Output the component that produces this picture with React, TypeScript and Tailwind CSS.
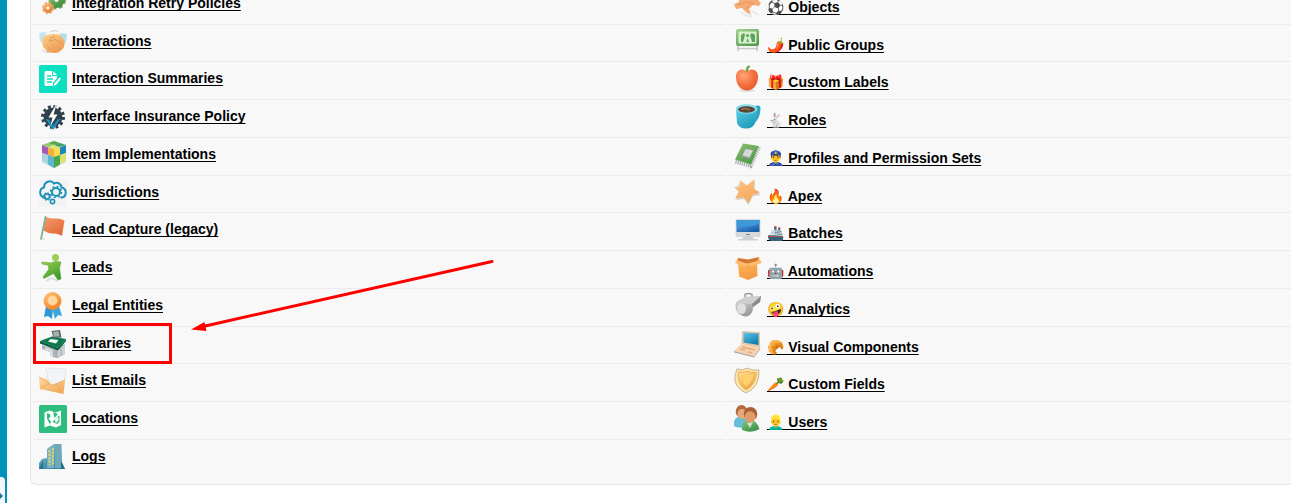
import type { ReactNode } from "react";

type GradProps = { id: string; from: string; to: string };

function Grad({ id, from, to }: GradProps) {
  return (
    <defs>
      <linearGradient id={id} x1="0" y1="0" x2="0.6" y2="1">
        <stop offset="0" stopColor={from} />
        <stop offset="1" stopColor={to} />
      </linearGradient>
    </defs>
  );
}

function Icon({ children }: { children: ReactNode }) {
  return (
    <svg viewBox="0 0 28 28" className="size-7 shrink-0" aria-hidden="true">
      {children}
    </svg>
  );
}

const gearsIcon = (
  <Icon>
    <Grad id="gearGreen" from="#8fc97a" to="#4c9444" />
    <Grad id="gearOrange" from="#f7b873" to="#e8863f" />
    <circle cx="17.500" cy="10" r="8" fill="none" stroke="#68a75d" strokeWidth="3" strokeDasharray="3.600 2.700" />
    <circle cx="17.500" cy="10" r="5" fill="none" stroke="url(#gearGreen)" strokeWidth="6" />
    <circle cx="9" cy="18" r="4.800" fill="none" stroke="#eba266" strokeWidth="2.500" strokeDasharray="2.200 1.570" />
    <circle cx="9" cy="18" r="3.300" fill="none" stroke="url(#gearOrange)" strokeWidth="3.600" />
  </Icon>
);

const handshakeIcon = (
  <Icon>
    <Grad id="hands" from="#ffd393" to="#ec9a4f" />
    <path d="M11 4q4-3 8-.5M3 22q4 4 8 2" fill="none" stroke="#cfcfcf" />
    <path d="M0 5l7-1-1 8-5 2z" fill="#c6e5f3" />
    <path d="M28 6l-7-1 1 8 5 1z" fill="#b4dcee" />
    <path d="M4 9q3-3 7-2.500 3-1.500 6 0 4-1 6 2.500l3 5-1.500 6-5 4.500-5 .5-6-1-4.500-5.500-1-5z" fill="url(#hands)" />
    <path d="M16 8q-5 1-6 5 4 0 6-1.500 4 1 8 5.500" fill="none" stroke="#d98d4a" strokeWidth="0.800" />
    <path d="M8 17l4 4.500M12 16l4 4.500M16 15l4 4" fill="none" stroke="#e09a58" strokeWidth="0.700" />
  </Icon>
);

const summaryIcon = (
  <Icon>
    <rect width="28" height="28" rx="1.500" fill="#0be0c0" />
    <path d="M7 6h7l4 4v3l-4 5v3H7q-1.500 0-1.500-1.500v-12Q5.500 6 7 6z" fill="#fff" />
    <path d="M13.500 6v4.500H18" fill="none" stroke="#0be0c0" />
    <path d="M8 11h4M8 14h6M8 17h5" stroke="#0be0c0" strokeWidth="1.300" />
    <path d="M20.500 12.500l1.500 1.300-5 6.200-2.200.8.600-2.200z" fill="#fff" />
  </Icon>
);

const boltIcon = (
  <Icon>
    <circle cx="14" cy="14" r="10.500" fill="none" stroke="#30404b" strokeWidth="3" strokeDasharray="2.900 2.600" />
    <circle cx="14" cy="14" r="9.500" fill="#30404b" />
    <path d="M6.500 16l7.500 11 7.500-11-3 .5L14 22.500l-4-6z" fill="#178fb8" />
    <path d="M18 0L9.500 14.500h4L11.500 23 18.500 11.500h-4z" fill="#fff" />
  </Icon>
);

const cubeIcon = (
  <Icon>
    <path d="M15 0l12 4v17l-12 6-12-6V4z" fill="#bfdce0" />
    <path d="M15 0l6 2-6 2-6-2z" fill="#58a945" />
    <path d="M9 2l6 2-5 2-7-2z" fill="#92cf63" />
    <path d="M21 2l6 2-7 2-5-2z" fill="#47a05d" />
    <path d="M15 4l5 2-5 2-5-2z" fill="#d9e96d" />
    <path d="M3 4l6 2.500V14l-6-2z" fill="#a75ab7" />
    <path d="M9 6.500L15 8v8l-6-2z" fill="#f6ae36" />
    <path d="M15 8l6-1.500V14l-6 2z" fill="#ffd94e" />
    <path d="M21 6.500L27 4v8l-6 2z" fill="#1f86bb" />
    <path d="M3 12l6 2v9l-6-3z" fill="#a9d3df" />
    <path d="M9 14l6 2v11l-6-3.500z" fill="#5db5cf" />
    <path d="M15 16l6-2v9.500L15 27z" fill="#4ba64a" />
    <path d="M21 14l6-2v8l-6 3z" fill="#d9e56b" />
  </Icon>
);

const jurisdictionIcon = (
  <Icon>
    <rect width="28" height="28" fill="#f2f3f4" />
    <path
      d="M6 18.500C-.5 18 0 9.500 5 8.500 5 2.500 12 .5 15 4.500c4-2 7.500 1 7.500 4 6 1 5.500 10-.5 10"
      fill="none"
      stroke="#1b91b8"
      strokeWidth="2"
      strokeLinecap="round"
    />
    <circle cx="17" cy="13" r="4" fill="none" stroke="#1b91b8" strokeWidth="2" />
    <circle cx="17" cy="13" r="5.500" fill="none" stroke="#1b91b8" strokeWidth="1.500" strokeDasharray="2 2.320" />
    <circle cx="8" cy="17.500" r="2.600" fill="none" stroke="#1b91b8" strokeWidth="1.700" />
    <circle cx="8" cy="17.500" r="3.800" fill="none" stroke="#1b91b8" strokeDasharray="1.500 1.480" />
    <circle cx="13.500" cy="22.500" r="2.100" fill="none" stroke="#1b91b8" strokeWidth="1.600" />
  </Icon>
);

const flagIcon = (
  <Icon>
    <Grad id="flag" from="#f59a6b" to="#e46a3b" />
    <path d="M7 1q5 2 9 1.500 5-.5 9.500 2L23 20q-4-3-8.500-2.500T4.500 14.500z" fill="url(#flag)" />
    <path d="M6.500 1L2 23" stroke="#7db391" strokeWidth="1.800" strokeLinecap="round" />
    <path d="M2 23.500l4-1" stroke="#d5d5d5" />
  </Icon>
);

const leadsIcon = (
  <Icon>
    <Grad id="lead" from="#9ad24b" to="#3f9a2e" />
    <path d="M7 27l5-3 7 3" fill="none" stroke="#d8dcd6" strokeWidth="1.500" />
    <circle cx="16.500" cy="3.500" r="3.500" fill="#9bce54" />
    <path
      d="M3 8l9 1 4-1.500L22 8l-1.500 6 1.500 11-3 1-4.500-6.500-9.500 5-1-1.500L10 15l-1-4-6-1z"
      fill="url(#lead)"
      stroke="#5aa33a"
      strokeWidth="0.600"
      strokeLinejoin="round"
    />
  </Icon>
);

const ribbonIcon = (
  <Icon>
    <Grad id="medal" from="#ffc27a" to="#f08528" />
    <path d="M7 14L5 25l4-1 4 3 1-11z" fill="#2f97d4" />
    <path d="M20 14l3 10-4-1-3 4-3-11z" fill="#3ba5df" />
    <circle cx="13.500" cy="9" r="9" fill="url(#medal)" />
    <circle cx="13.500" cy="8.500" r="5" fill="#ffd6a0" />
  </Icon>
);

const libraryIcon = (
  <Icon>
    <path d="M3 15l12 4 11-5v10l-7 4-6-1v-4L3 19z" fill="#a9b2b7" />
    <path d="M6 17l8 3v7l-3-1v-4l-5-2z" fill="#d8dde0" />
    <path d="M18 19l8-4v9l-8 4z" fill="#cbd3d7" />
    <path d="M18 19v8.500M22 17v9" stroke="#96a1a7" strokeWidth="0.800" />
    <path d="M1 11l12-4.500L27 9l-8 9z" fill="#0b7a4c" />
    <path d="M1 11v2.500l18 7 8-9.500V9l-8 9z" fill="#0a5d3b" />
    <path d="M9 11.500l2.500-2.500 8 1-2.500 3.500z" fill="#f6fbf8" />
    <path d="M12.500 1L21 0l1.500 7.500-8 .5z" fill="#5d6869" />
    <path d="M14 2l5.500-.7 1 5-5.500.5z" fill="#a4b0b1" />
  </Icon>
);

const emailIcon = (
  <Icon>
    <Grad id="mail" from="#ffdca2" to="#f3ac5c" />
    <path d="M7 1l20 1-2 16-14 5z" fill="#f3f4f6" stroke="#d5d8dc" strokeWidth="0.600" />
    <path d="M0 10l8 2 5 6 13-5-1.500 14L1 22z" fill="url(#mail)" />
    <path d="M0 10l13 8.500L26 13M1 22l8.500-5.500M24.500 27L17 17" fill="none" stroke="#e3a45d" strokeWidth="0.700" />
  </Icon>
);

const locationsIcon = (
  <Icon>
    <rect width="28" height="28" rx="1.500" fill="#2dbd7e" />
    <path d="M5.500 7.500l5-2 6 2 5.500-2V20l-5 2.500-6-2-5.500 2z" fill="#fff" />
    <path d="M8 8l3 1 .5 3-2 1.500 2.500 3-1 3-3-6zM14 7l5 2-3.500 4zM17.500 12.500l3-2v6L18.500 19l-5-2z" fill="#2dbd7e" />
    <path d="M17 13q2-1.500 2.500.5T17 18q-2-3 0-5z" fill="#fff" />
  </Icon>
);

const logsIcon = (
  <Icon>
    <Grad id="tower" from="#8fc3d4" to="#2f83a0" />
    <path d="M0 26v-6l3-4 5-1V6l7-5h7l1 18 3 7z" fill="url(#tower)" />
    <path d="M16 1h6.500v24H16z" fill="#6ea8ba" />
    <path d="M9 5l6-3v23H8z" fill="#7ab4c4" />
    <path d="M10.500 7v15M14 5v17" stroke="#e3d566" strokeWidth="1.800" strokeDasharray="2.500 1" />
    <path d="M0 26l4-8v8M26 26l-4-7v7z" fill="#246f8c" />
  </Icon>
);

const objectIcon = (
  <Icon>
    <path d="M7 22l8 5M17 20l7 5M13 22l5 5" stroke="#dde1e4" strokeWidth="1.200" />
    <path d="M5 8l8-3 5 3 6 2 3 3-2 3-6-1-4 4 2 5-4-1-5-5-6 1-2-5 5-2z" fill="#f5ab74" />
    <path d="M4 15l9-3 8 2M12 19l4-5" fill="none" stroke="#ea9358" />
  </Icon>
);

const boardIcon = (
  <Icon>
    <Grad id="board" from="#a3d18f" to="#559e4d" />
    <path d="M4 17v6M23 17v6M3 20.500h21" stroke="#c6c9c6" strokeWidth="1.700" />
    <rect x="2" y="1" width="23" height="17" rx="2" fill="url(#board)" />
    <rect x="4.500" y="3.500" width="18" height="12" rx="1" fill="#d9edcf" />
    <path d="M7 14V7l3-2 1 2-2 7zM12.500 14l1-4 1.500 4zM16 7l2-2 3 2v7h-3z" fill="#5da458" />
    <circle cx="13.500" cy="7.500" r="1.500" fill="#5da458" />
  </Icon>
);

const appleIcon = (
  <Icon>
    <defs>
      <radialGradient id="apple" cx="0.350" cy="0.300" r="0.800">
        <stop offset="0" stopColor="#ffa67a" />
        <stop offset="0.550" stopColor="#f4713f" />
        <stop offset="1" stopColor="#e0592c" />
      </radialGradient>
    </defs>
    <ellipse cx="13" cy="25.500" rx="8" ry="1.500" fill="#ddd" />
    <path d="M13 6C6 2 1.500 6 2 13c.5 7 5 12.500 11 12.500S23.500 20 24 13c.5-7-4-11-11-7z" fill="url(#apple)" />
    <path d="M12 7q-1-4 2-6.500l2.500.5Q13.500 4 14 7z" fill="#77a550" />
  </Icon>
);

const cupIcon = (
  <Icon>
    <Grad id="cup" from="#59cde5" to="#1e9abb" />
    <path d="M21 3q6-2 5.500 3-.5 10-7 15z" fill="#2aa5c3" />
    <path d="M2 6l1 14q2 5.500 9 5.500T21 20L23.500 6z" fill="url(#cup)" />
    <ellipse cx="12.500" cy="6" rx="10.800" ry="4.800" fill="#84dced" />
    <ellipse cx="12.500" cy="6.500" rx="8.500" ry="3.300" fill="#5c4435" />
    <path d="M7 6.500q4-2 9 .5" fill="none" stroke="#9c7a5e" strokeWidth="1.200" />
  </Icon>
);

const chipIcon = (
  <Icon>
    <Grad id="chip" from="#8dc26d" to="#4d9b47" />
    <path d="M1.500 20.500L16.500 25 25 6" fill="none" stroke="#a6aaa7" strokeWidth="4" strokeDasharray="1.200 1" />
    <path d="M9 2.500L25 5l-8 18.500L1 18.500z" fill="url(#chip)" />
    <path d="M10.500 7l9.500 1.500-4.500 10L6.500 16z" fill="#8b9890" />
    <path d="M11.500 8l7.500 1.300-3.500 7.200L8.500 14.500z" fill="#d3dad4" />
  </Icon>
);

const starIcon = (
  <Icon>
    <Grad id="star" from="#ffc684" to="#f5a55c" />
    <path d="M7 2l6 5 8-5-.5 10 6.500 4-8 1-4.500 9L10 20l-8 1 3.500-7L2 10z" fill="#d5cec2" />
    <path d="M5.500 1L13 6.500 20.500 0l-1 9.500 6.500 4-7.500 2L14.500 24 9.500 18 1 19.500l4-7L0 8l7-.5z" fill="url(#star)" />
  </Icon>
);

const monitorIcon = (
  <Icon>
    <Grad id="screen" from="#68b5eb" to="#185fae" />
    <path d="M1.500 3h25v18h-25z" fill="#d7dadd" />
    <path d="M2.500 4h23v12h-23z" fill="url(#screen)" />
    <path d="M2.500 10q11 2 23-2V4h-23z" fill="#3f98d7" />
    <path d="M10 20h8l2 3H8zM4 23h20v1.500H4z" fill="#cdd1d4" />
    <path d="M12 18.500h4" stroke="#75808a" />
  </Icon>
);

const boxIcon = (
  <Icon>
    <Grad id="carton" from="#ffb458" to="#f39a42" />
    <path d="M4 8l9 2.500L23 8l.5 14-9.500 4-9-3.500z" fill="url(#carton)" />
    <path d="M4 4l10 1.500L25 3l-1 4-11 3-9-3z" fill="#d47a30" />
    <path d="M4 4L1 9l10 4 3-3-10-3zM25 3l2.500 6-9 3.500-5.500-2.500 11-3z" fill="#ffbb6b" />
  </Icon>
);

const whistleIcon = (
  <Icon>
    <Grad id="whistle" from="#e6e6e6" to="#8f8f8f" />
    <path d="M11 5V2.500q4-2 7 0V6" fill="none" stroke="#9b9b9b" strokeWidth="1.500" />
    <path d="M2 10l9-5 16-1-1 6-7 5q0 6-4 8.500T5 22Q0 17 2 10z" fill="url(#whistle)" />
    <path d="M11 5l16-1-9 8-16-1.500z" fill="#cfcfcf" />
    <path d="M18 12l9-8-1 6-7 5z" fill="#8b8b8b" />
    <ellipse cx="7.500" cy="16.500" rx="4.500" ry="5.500" fill="#dedede" />
  </Icon>
);

const laptopIcon = (
  <Icon>
    <Grad id="laptop" from="#5ac5ed" to="#147fad" />
    <path d="M8 1l18 1v16L7.500 14z" fill="#e3c7a9" />
    <path d="M9.500 2.500l15 1V15l-15-2.500z" fill="url(#laptop)" />
    <path d="M7.500 14L26 18l-6 8L0 21z" fill="#f5d3b0" />
    <path d="M0 21v1.500L20 27.500l6.500-8.500-.5-1-6 8z" fill="#b8aba0" />
    <path d="M8 17l13 3M6 19l5 1M14 22l4 1" stroke="#eaa87a" strokeWidth="1.400" />
  </Icon>
);

const shieldIcon = (
  <Icon>
    <Grad id="shield" from="#ffe39c" to="#eba03a" />
    <path d="M3 2q6 2 10-1 5 3 12 2 1 17-13 23Q-1 20 1 8z" fill="#fce5aa" stroke="#b7a785" strokeWidth="0.800" />
    <path d="M4.500 5q5 1 8.500-1 4 2 9.500 1.500Q22 17 12 23 3 17 4.500 5z" fill="url(#shield)" stroke="#f0b04d" />
    <path d="M8 8q3 0 5-1.500Q16 8.500 19 8q0 7-7 11.500Q7 15 8 8z" fill="#ffcf6b" />
  </Icon>
);

const usersIcon = (
  <Icon>
    <Grad id="userGreen" from="#8dc881" to="#3d9149" />
    <path d="M0 21Q-1 12 6 12l7 2v8Q4 24 0 21z" fill="#63bfdb" />
    <ellipse cx="7.500" cy="6.500" rx="5.800" ry="6.500" fill="#b4693c" />
    <ellipse cx="8" cy="9" rx="4.500" ry="5" fill="#e6a87a" />
    <path d="M8 25q-1-10 7-10t10.500 9Q17 29 8 25z" fill="url(#userGreen)" />
    <path d="M13 18l3 5 3-6z" fill="#d1e8c8" />
    <ellipse cx="16.500" cy="9" rx="6.800" ry="7" fill="#ad6038" />
    <ellipse cx="16" cy="12" rx="5.500" ry="5.800" fill="#e29a6b" />
  </Icon>
);

type Item = { label: string; icon: ReactNode; emoji?: string; marked?: boolean };

const leftItems: Item[] = [
  { label: "Integration Retry Policies", icon: gearsIcon },
  { label: "Interactions", icon: handshakeIcon },
  { label: "Interaction Summaries", icon: summaryIcon },
  { label: "Interface Insurance Policy", icon: boltIcon },
  { label: "Item Implementations", icon: cubeIcon },
  { label: "Jurisdictions", icon: jurisdictionIcon },
  { label: "Lead Capture (legacy)", icon: flagIcon },
  { label: "Leads", icon: leadsIcon },
  { label: "Legal Entities", icon: ribbonIcon },
  { label: "Libraries", icon: libraryIcon, marked: true },
  { label: "List Emails", icon: emailIcon },
  { label: "Locations", icon: locationsIcon },
  { label: "Logs", icon: logsIcon },
];

const rightItems: Item[] = [
  { label: "Objects", emoji: "⚽", icon: objectIcon },
  { label: "Public Groups", emoji: "🌶️", icon: boardIcon },
  { label: "Custom Labels", emoji: "🎁", icon: appleIcon },
  { label: "Roles", emoji: "🐇", icon: cupIcon },
  { label: "Profiles and Permission Sets", emoji: "👮‍♂️", icon: chipIcon },
  { label: "Apex", emoji: "🔥", icon: starIcon },
  { label: "Batches", emoji: "🚢", icon: monitorIcon },
  { label: "Automations", emoji: "🤖", icon: boxIcon },
  { label: "Analytics", emoji: "🤪", icon: whistleIcon },
  { label: "Visual Components", emoji: "🥐", icon: laptopIcon },
  { label: "Custom Fields", emoji: "🥕", icon: shieldIcon },
  { label: "Users", emoji: "👱‍♂️", icon: usersIcon },
];

function Callout() {
  return (
    <>
      <div className="pointer-events-none absolute -top-1 left-0 h-[41px] w-[139px] border-3 border-[#ff0000]" />
      <svg
        viewBox="0 0 304 72"
        className="pointer-events-none absolute -top-[68px] left-[158px] h-[72px] w-[304px]"
        aria-hidden="true"
      >
        <path d="M12 67.500L301 2.500" stroke="#ff0000" strokeWidth="3" strokeLinecap="round" />
        <path d="M0 70.500L13.500 63 15.500 72z" fill="#ff0000" />
      </svg>
    </>
  );
}

function ItemList({ items, name }: { items: Item[]; name: string }) {
  return (
    <ul aria-label={name}>
      {items.map((item) => (
        <li
          key={item.label}
          className="relative flex h-[38px] items-start gap-[5px] border-b border-[#ebebeb] px-1.5 pt-[3px] nth-[4n+2]:h-[37px] nth-[13]:h-11 nth-[13]:border-b-0"
        >
          {item.icon}
          <a
            href="#"
            className={
              item.emoji
                ? "pt-[7px] whitespace-nowrap underline decoration-1 underline-offset-2 [text-decoration-skip-ink:none]"
                : "pt-[3px] whitespace-nowrap underline decoration-1 underline-offset-2 [text-decoration-skip-ink:none]"
            }
          >
            {item.emoji ? `${item.emoji} ${item.label}` : item.label}
          </a>
          {item.marked && <Callout />}
        </li>
      ))}
    </ul>
  );
}

export default function App() {
  return (
    <div className="flex overflow-hidden bg-white font-['Liberation_Sans','Noto_Color_Emoji',sans-serif] text-sm/5 font-bold text-black">
      <div className="flex w-[7px] shrink-0 flex-col justify-end bg-[#0092b8]">
        <button
          type="button"
          aria-label="Expand sidebar"
          className="flex h-[26px] w-[5px] items-end overflow-hidden rounded-tr bg-[#f3f5f7] pb-1"
        >
          <svg viewBox="0 0 3 6" className="h-1.5 w-[3px]" aria-hidden="true">
            <path d="M0 0l3 3-3 3z" fill="#1577a8" />
          </svg>
        </button>
      </div>
      <main className="ml-[23px] min-w-0 flex-1 pb-[18px]">
        <div className="-mt-[13px] grid grid-cols-[16fr_13fr] gap-x-0.5 rounded-bl-md border-b border-l border-[#e6e6e6] bg-[#f8f8f8] pl-0.5">
          <ItemList name="Salesforce objects" items={leftItems} />
          <ItemList name="Shortcuts" items={rightItems} />
        </div>
      </main>
    </div>
  );
}
